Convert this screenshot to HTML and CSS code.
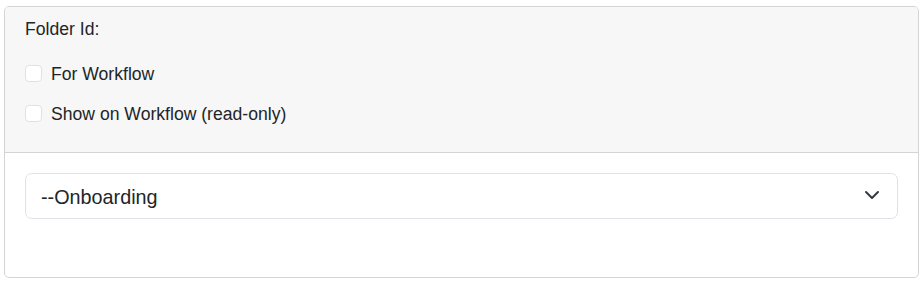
FILE: index.html
```html
<!DOCTYPE html>
<html lang="en">
<head>
<meta charset="utf-8">
<title>Folder</title>
<link rel="stylesheet" href="styles.css">
</head>
<body>
  <div class="card">
    <div class="card-header">
      <div class="field-label">Folder Id:</div>
      <label class="check-row">
        <span class="checkbox"></span>
        <span>For Workflow</span>
      </label>
      <label class="check-row">
        <span class="checkbox"></span>
        <span>Show on Workflow (read-only)</span>
      </label>
    </div>
    <div class="card-body">
      <div class="select">
        <span class="select-text">--Onboarding</span>
        <svg class="chevron" width="16" height="10" viewBox="0 0 16 10" aria-hidden="true">
          <path d="M2 2 L8 8 L14 2" fill="none" stroke="#343a40" stroke-width="2" stroke-linecap="round" stroke-linejoin="round"/>
        </svg>
      </div>
    </div>
  </div>
</body>
</html>
```

FILE: styles.css
```css
* { box-sizing: border-box; }

body {
  margin: 0;
  background: #ffffff;
  font-family: "Liberation Sans", Arial, sans-serif;
  color: #212529;
  font-size: 17.6px;
  line-height: 26.4px;
}

.card {
  margin: 6px 0 0 4px;
  width: 915px;
  height: 272px;
  border: 1px solid #d4d4d4;
  border-radius: 5px;
  display: flex;
  flex-direction: column;
  overflow: hidden;
}

.card-header {
  background: #f7f7f7;
  border-bottom: 1px solid #d4d4d4;
  padding: 9px 20px 0 20px;
  height: 146px;
  display: flex;
  flex-direction: column;
}

.field-label {
  height: 26.4px;
  margin-bottom: 18.3px;
}

.check-row {
  display: flex;
  align-items: center;
  height: 26.4px;
  margin-bottom: 13.6px;
}

.checkbox {
  width: 17px;
  height: 17px;
  border: 1px solid #dee2e6;
  border-radius: 4px;
  background: #ffffff;
  margin-right: 9px;
  flex: none;
}

.card-body {
  padding: 20px 20px 0 20px;
  flex: 1;
}

.select {
  height: 46px;
  border: 1px solid #dee2e6;
  border-radius: 6.6px;
  background: #ffffff;
  padding: 0 17px 0 15px;
  display: flex;
  justify-content: space-between;
  align-items: flex-start;
}

.select-text {
  font-size: 19.8px;
  line-height: 29.7px;
  padding-top: 9.4px;
}

.chevron {
  margin-top: 16px;
  flex: none;
}
```
